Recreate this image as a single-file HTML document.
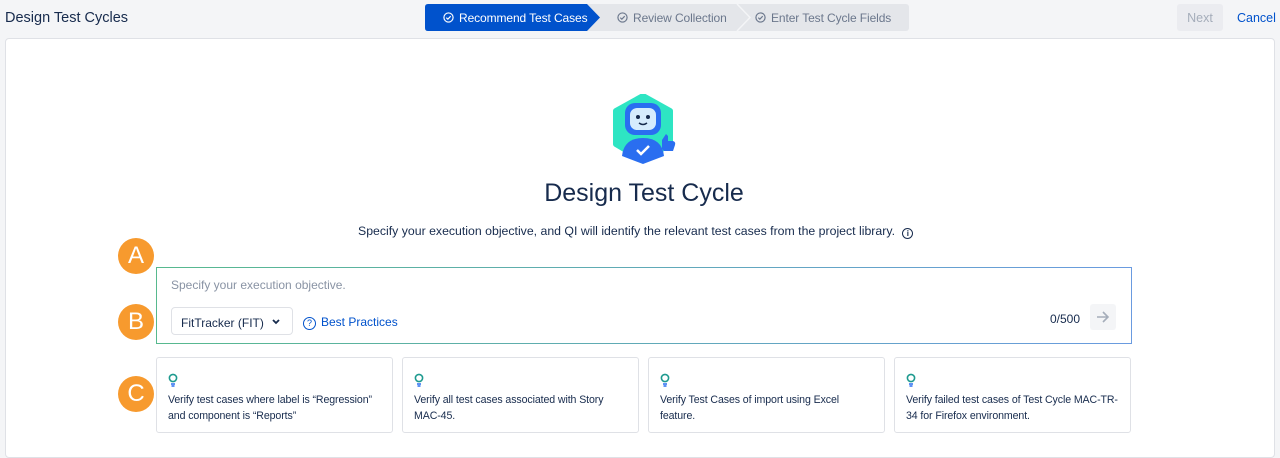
<!DOCTYPE html>
<html><head><style>
*{box-sizing:border-box;margin:0;padding:0}
body{width:1280px;height:441px;background:#f4f5f7;font-family:"Liberation Sans",sans-serif;color:#172b4d;position:relative;overflow:hidden}
.abs{position:absolute}
.title{left:5px;top:10px;font-size:14.5px;color:#172b4d}
.step{top:4px;height:27px;font-size:12px;display:flex;align-items:center;gap:5px;letter-spacing:-0.1px}
.panel{left:5px;top:38px;width:1270px;height:420px;background:#fff;border:1px solid #dfe1e6;border-radius:4px}
.badge{width:36px;height:36px;border-radius:50%;background:#f79a2e;color:#fff;font-size:24px;display:flex;align-items:center;justify-content:center;left:118px}
.card{top:357px;width:237px;height:76px;border:1px solid #dfe1e6;border-radius:3px;padding:15px 8px 0 11px;font-size:10.6px;line-height:16px;color:#172b4d;letter-spacing:-0.1px}
.ck{width:11px;height:11px;display:inline-block}
</style></head><body>
<div class="abs title">Design Test Cycles</div>
<svg class="abs" style="left:425px;top:4px" width="484" height="27">
<rect x="300" y="0" width="184" height="27" rx="3" fill="#e4e6ea"/>
<rect x="160" y="0" width="180" height="27" fill="#e4e6ea"/>
<polyline points="312,0 325,13.5 312,27" fill="none" stroke="#f4f5f7" stroke-width="1.5"/>
<path d="M3 0H162L175 13.5L162 27H3Q0 27 0 24V3Q0 0 3 0Z" fill="#0052cc"/>
</svg>
<div class="abs step" style="left:443px;color:#fff"><svg class="ck" viewBox="0 0 12 12"><circle cx="6" cy="6" r="5" fill="none" stroke="#fff" stroke-width="1.3"/><path d="M3.6 6.2L5.3 7.8L8.4 4.6" fill="none" stroke="#fff" stroke-width="1.3"/></svg>Recommend Test Cases</div>
<div class="abs step" style="left:617px;color:#6b778c"><svg class="ck" viewBox="0 0 12 12"><circle cx="6" cy="6" r="5" fill="none" stroke="#6b778c" stroke-width="1.3"/><path d="M3.6 6.2L5.3 7.8L8.4 4.6" fill="none" stroke="#6b778c" stroke-width="1.3"/></svg>Review Collection</div>
<div class="abs step" style="left:755px;color:#6b778c"><svg class="ck" viewBox="0 0 12 12"><circle cx="6" cy="6" r="5" fill="none" stroke="#6b778c" stroke-width="1.3"/><path d="M3.6 6.2L5.3 7.8L8.4 4.6" fill="none" stroke="#6b778c" stroke-width="1.3"/></svg>Enter Test Cycle Fields</div>
<div class="abs" style="left:1177px;top:4px;width:46px;height:27px;background:#ebecf0;border-radius:3px;color:#a5adba;font-size:12.5px;display:flex;align-items:center;justify-content:center">Next</div>
<div class="abs" style="left:1237px;top:11px;color:#0052cc;font-size:12.5px">Cancel</div>
<div class="abs panel"></div>
<svg class="abs" style="left:606px;top:94px" width="74" height="70" viewBox="0 0 74 70">
<path d="M37 2L64 17V50L37 66L10 50V17Z" fill="#2ee5c3" stroke="#2ee5c3" stroke-width="6" stroke-linejoin="round"/>
<path d="M16 62Q18 44 37 44Q56 44 58 62L37 70Z" fill="#2a6ef0"/>
<rect x="19" y="9" width="36" height="32" rx="10" fill="#2a6ef0"/>
<rect x="24" y="14" width="26" height="22" rx="7" fill="#d6ecfd"/>
<circle cx="32" cy="23" r="2" fill="#172b4d"/><circle cx="42" cy="23" r="2" fill="#172b4d"/>
<path d="M33 29Q37 32 41 29" stroke="#172b4d" stroke-width="1.5" fill="none"/>
<path d="M31 56L35 60L43 52" stroke="#fff" stroke-width="2.5" fill="none"/>
<path d="M56 55V46L60 40L62 42V47H67Q70 48 69 51L67 57H58Z" fill="#2a6ef0"/>
</svg>
<div class="abs" style="left:0;width:1288px;top:179px;text-align:center;font-size:25px;color:#172b4d">Design Test Cycle</div>
<div class="abs" style="left:358px;top:224px;font-size:12.3px;color:#172b4d">Specify your execution objective, and QI will identify the relevant test cases from the project library. <span style="display:inline-block;width:11px;height:11px;border:1.3px solid #172b4d;border-radius:50%;vertical-align:-1px;margin-left:4px;font-size:8px;line-height:9px;text-align:center;font-weight:bold">i</span></div>
<div class="abs badge" style="top:238px">A</div>
<div class="abs badge" style="top:304px">B</div>
<div class="abs badge" style="top:376px">C</div>
<div class="abs" style="left:156px;top:267px;width:976px;height:77px;border:1.5px solid;border-image:linear-gradient(90deg,#57b98e,#6a9be0) 1"></div>
<div class="abs" style="left:171px;top:278px;font-size:12px;color:#8993a4">Specify your execution objective.</div>
<div class="abs" style="left:171px;top:307px;width:122px;height:28px;border:1px solid #dfe1e6;border-radius:4px;font-size:12px;padding:8px 0 0 9px">FitTracker (FIT)<svg style="position:absolute;right:12px;top:11px" width="8" height="6"><path d="M1 1L4 4L7 1" stroke="#172b4d" stroke-width="1.8" fill="none"/></svg></div>
<div class="abs" style="left:303px;top:315px;font-size:12px;color:#0052cc"><span style="display:inline-block;width:13px;height:13px;border:1.3px solid #0052cc;border-radius:50%;font-size:9px;line-height:11px;text-align:center;margin-right:5px">?</span>Best Practices</div>
<div class="abs" style="left:1050px;top:312px;font-size:12px;color:#172b4d">0/500</div>
<div class="abs" style="left:1090px;top:304px;width:26px;height:26px;background:#f4f5f7;border-radius:3px"><svg style="position:absolute;left:6px;top:7px" width="14" height="12"><path d="M1 6H12M7 1L12 6L7 11" stroke="#a5adba" stroke-width="1.6" fill="none"/></svg></div>
<div class="abs card" style="left:156px"><svg width="10" height="14"><circle cx="5" cy="5" r="3.6" stroke="#1e9a8f" stroke-width="1.6" fill="none"/><path d="M3 11H7M3.5 13H6.5" stroke="#2a6ef0" stroke-width="1.4"/></svg><br>Verify test cases where label is “Regression” and component is “Reports”</div>
<div class="abs card" style="left:402px"><svg width="10" height="14"><circle cx="5" cy="5" r="3.6" stroke="#1e9a8f" stroke-width="1.6" fill="none"/><path d="M3 11H7M3.5 13H6.5" stroke="#2a6ef0" stroke-width="1.4"/></svg><br>Verify all test cases associated with Story MAC-45.</div>
<div class="abs card" style="left:648px"><svg width="10" height="14"><circle cx="5" cy="5" r="3.6" stroke="#1e9a8f" stroke-width="1.6" fill="none"/><path d="M3 11H7M3.5 13H6.5" stroke="#2a6ef0" stroke-width="1.4"/></svg><br>Verify Test Cases of import using Excel feature.</div>
<div class="abs card" style="left:894px"><svg width="10" height="14"><circle cx="5" cy="5" r="3.6" stroke="#1e9a8f" stroke-width="1.6" fill="none"/><path d="M3 11H7M3.5 13H6.5" stroke="#2a6ef0" stroke-width="1.4"/></svg><br>Verify failed test cases of Test Cycle MAC-TR-34 for Firefox environment.</div>
</body></html>
